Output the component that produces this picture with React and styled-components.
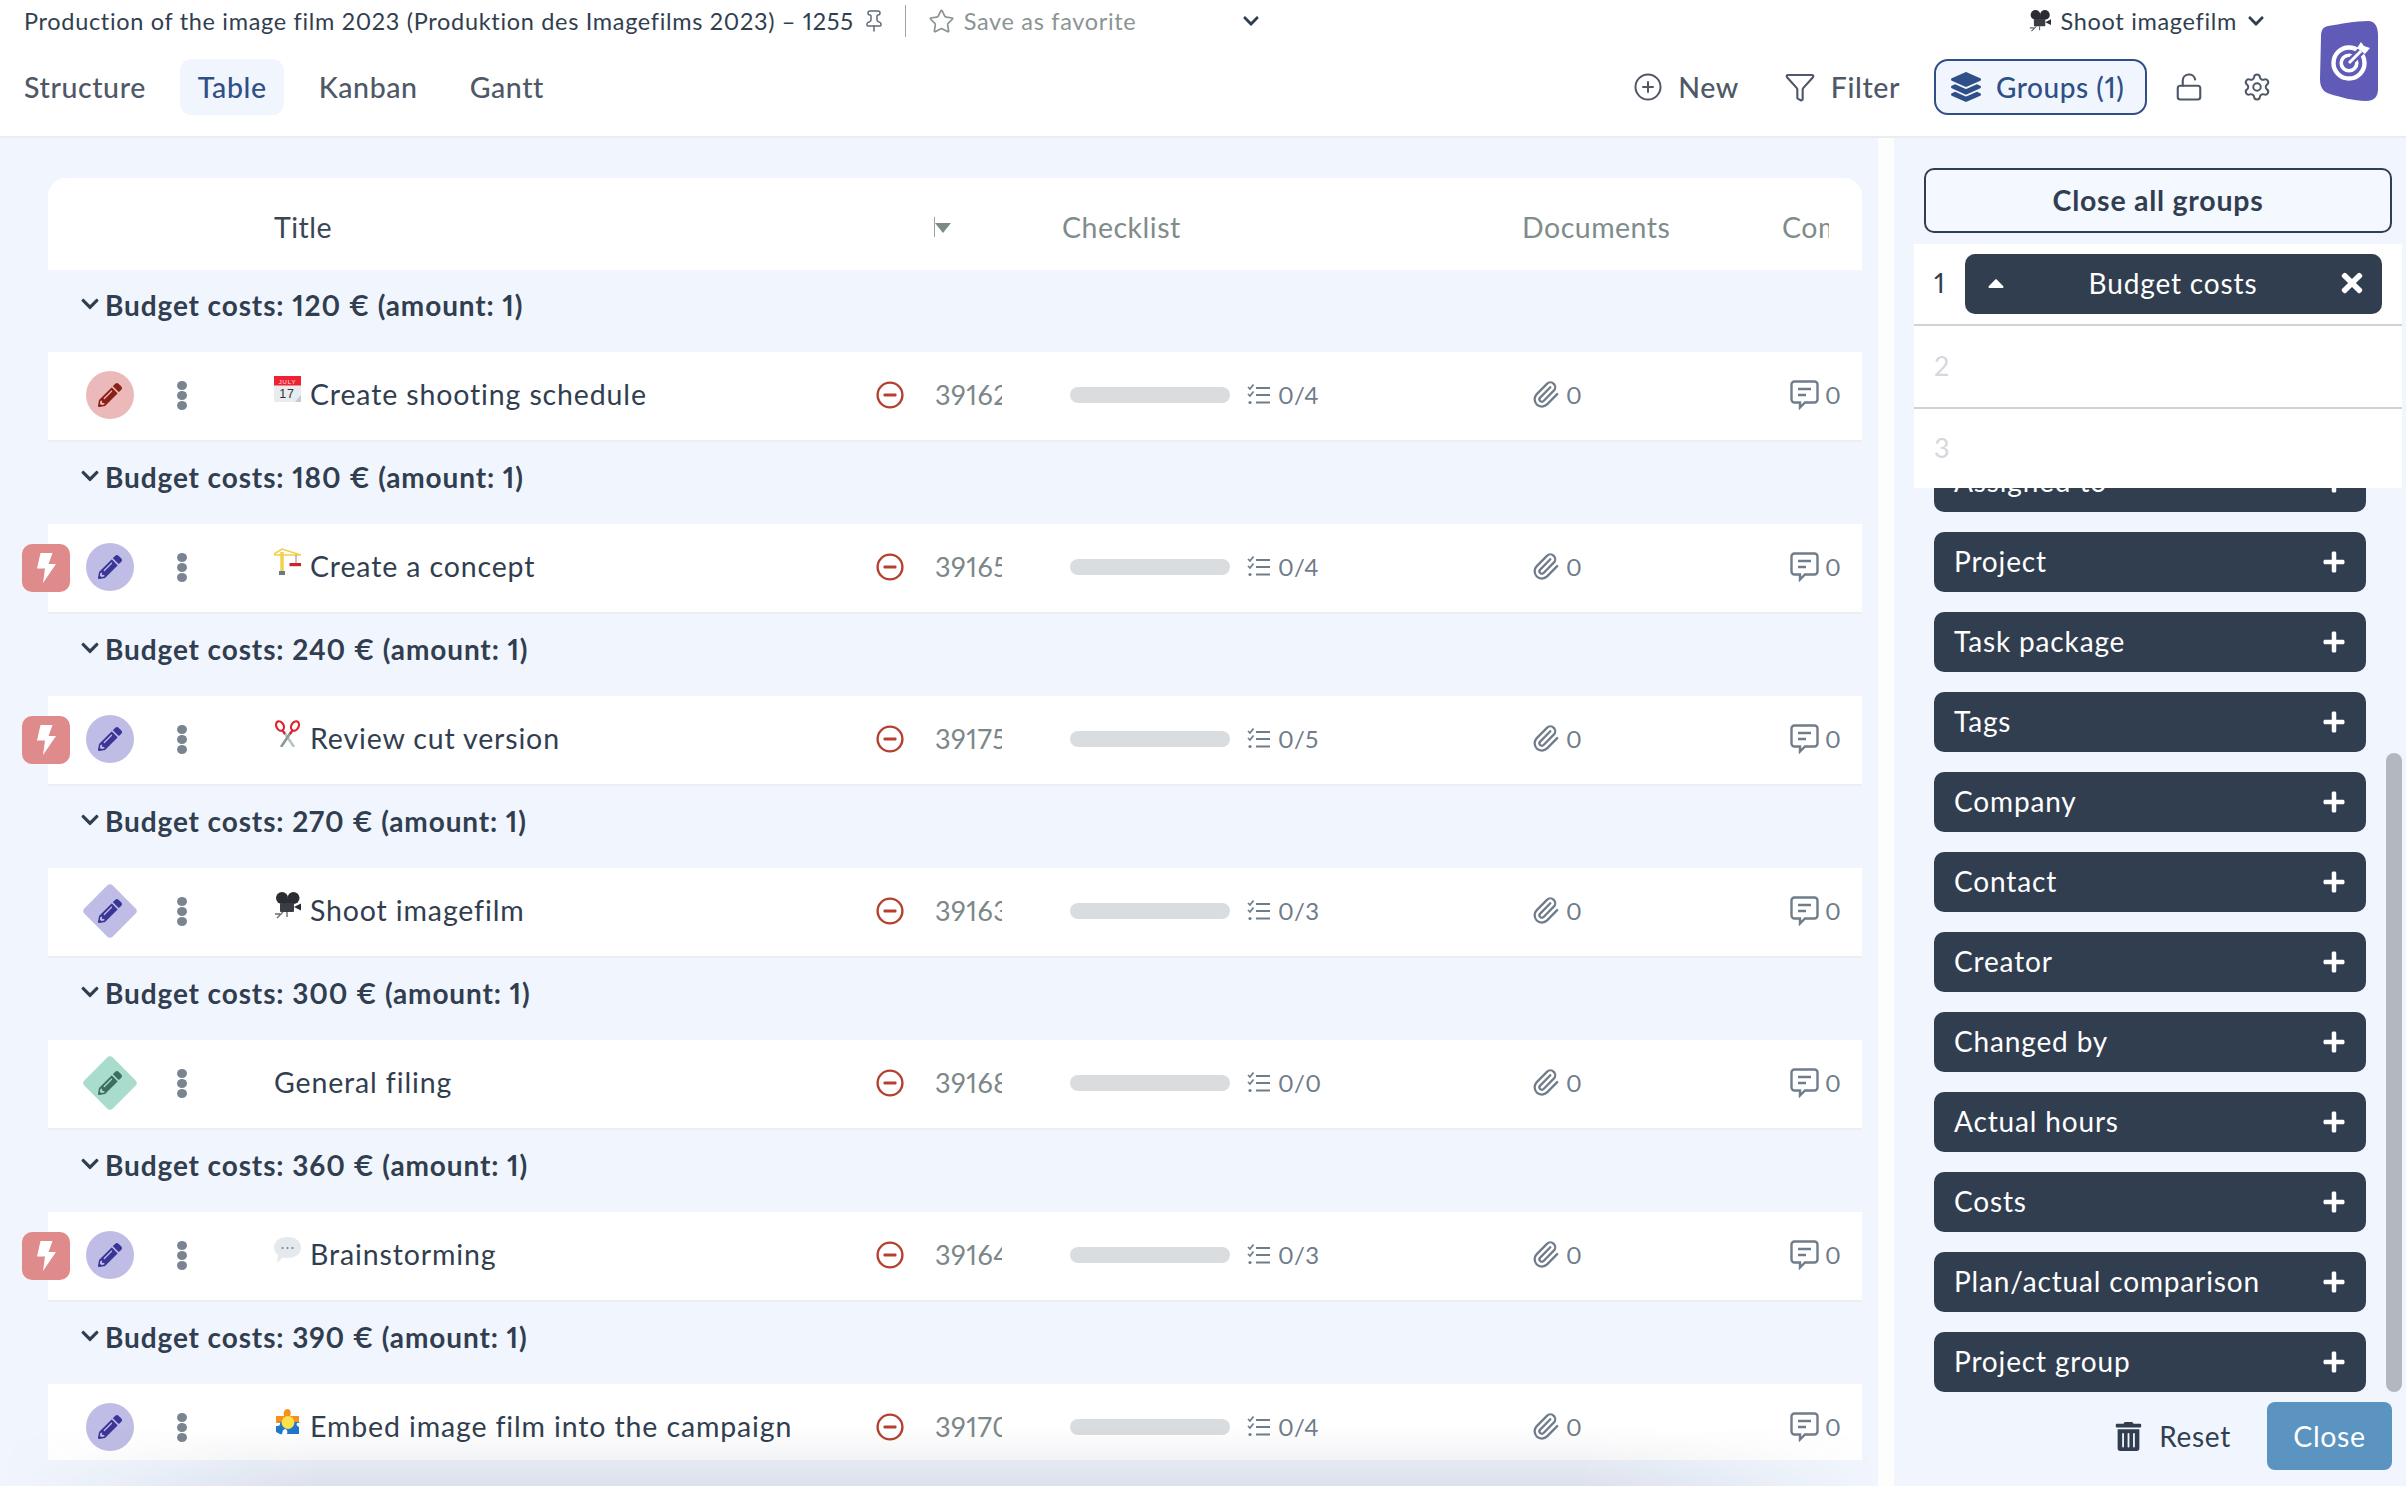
import React from 'react';
import styled, { createGlobalStyle } from 'styled-components';
import { FaPencilAlt, FaLayerGroup, FaChevronDown, FaTimes, FaPlus, FaCaretUp, FaTrashAlt } from 'react-icons/fa';
import { Pin, Star, CirclePlus, Funnel, LockOpen, Settings, Paperclip } from 'lucide-react';

const GlobalStyle = createGlobalStyle`
  html, body { margin: 0; padding: 0; background: #fff; }
  * { box-sizing: border-box; }
  body { font-family: "Lato", "Noto Sans", sans-serif; color: #313E50; font-variant-numeric: proportional-nums; }
`;

const COLS = '226px 603px 58px 135px 461px 259px 72px';

const Page = styled.div`
  width: 2406px; height: 1486px; display: flex; flex-direction: column; overflow: hidden;
`;
const Header = styled.header`
  height: 138px; flex: none; display: flex; padding: 0 28px 0 24px; background: #fff;
  border-bottom: 2px solid #E9ECF3; position: relative; z-index: 2;
`;
const HeaderMain = styled.div`flex: 1; display: flex; flex-direction: column; min-width: 0;`;
const TopRow = styled.div`
  height: 42px; display: flex; align-items: center; font-size: 23.5px; letter-spacing: .68px; color: #313E50; white-space: nowrap;
`;
const PinWrap = styled.span`display: flex; margin-left: 8px; color: #5F6B78;`;
const Divider = styled.span`width: 1px; height: 32px; background: #9BA3AB; margin: 0 22px 0 19px;`;
const FavText = styled.span`color: #8A9492; margin-left: 9px;`;
const StarWrap = styled.span`display: flex; color: #8A9492;`;
const FavChevron = styled.span`display: flex; margin-left: 106px; color: #313E50; font-size: 18px;`;
const Crumb = styled.div`margin-left: auto; display: flex; align-items: center; padding-right: 7px;`;
const CrumbText = styled.span`margin-left: 10px;`;
const CrumbChevron = styled.span`display: flex; margin-left: 10px; font-size: 18px;`;
const NavRow = styled.div`height: 56px; margin-top: 17px; display: flex; align-items: center; gap: 17px;`;
const Tab = styled.div`
  height: 56px; display: flex; align-items: center; padding: 0 17.5px; border-radius: 12px; font-size: 28.5px; letter-spacing: .6px; font-weight: 500;
  color: ${p => (p.$active ? '#2F4F87' : '#4F5866')};
  background: ${p => (p.$active ? '#F1F6FE' : 'transparent')};
  &:first-child { padding-left: 0; }
`;
const NavActions = styled.div`margin-left: auto; display: flex; align-items: center;`;
const Action = styled.div`
  display: flex; align-items: center; gap: 15px; font-size: 28.5px; letter-spacing: .6px; font-weight: 500; color: #4F5866; margin-right: ${p => p.$mr || 0}px;
`;
const GroupsBtn = styled.div`
  width: 213px; height: 56px; display: flex; align-items: center; gap: 15px; padding-left: 15px; font-size: 28px; letter-spacing: .55px; font-weight: 500; white-space: nowrap;
  color: #2F4F87; background: #F1F6FE; border: 2px solid #2F4F87; border-radius: 14px; margin-right: 27px;
`;
const IconBtn = styled.span`display: flex; color: #4F5866; margin-right: ${p => p.$mr || 0}px;`;
const LogoWrap = styled.div`flex: none; width: 58px; margin: 21px 0 0 48px;`;

const Main = styled.main`flex: 1; display: flex; min-height: 0;`;
const LeftPane = styled.section`
  width: 1878px; flex: none; position: relative; overflow: hidden; background: #F1F6FE; padding: 40px 16px 26px 48px;
`;
const TableClip = styled.div`height: 100%; overflow: hidden; margin-left: -48px; padding-left: 48px;`;
const TableCard = styled.div`width: 1814px;`;
const HeadRow = styled.div`
  height: 92px; display: grid; grid-template-columns: ${COLS}; align-items: center; background: #fff; border-radius: 18px 18px 0 0;
  font-size: 28.5px; letter-spacing: .5px; color: #808C8C; padding-top: 6px;
`;
const HeadCell = styled.div`
  grid-column: ${p => p.$col}; margin-left: ${p => p.$ml || 0}px; color: ${p => (p.$dark ? '#3A4656' : '#808C8C')};
  white-space: nowrap; overflow: hidden; max-width: ${p => p.$max || 'none'};
`;
const SortMark = styled.div`
  grid-column: 4; margin-left: -1px; display: flex; align-items: center; height: 20px; border-left: 1px solid #9AA3A3;
  &::after { content: ''; border-left: 8px solid transparent; border-right: 8px solid transparent; border-top: 10px solid #7E8A8A; margin-top: 1px; }
`;
const GroupHead = styled.div`
  height: 82px; display: flex; align-items: center; padding: 0 0 12px 32px; gap: 5px; font-size: 28px; font-weight: 700; letter-spacing: .88px; color: #313E50;
`;
const GroupChevron = styled.span`display: flex; font-size: 20px; margin-top: -3px;`;
const Row = styled.div`
  height: 90px; position: relative; display: grid; grid-template-columns: ${COLS}; align-items: center; background: #fff; border-bottom: 2px solid #ECEEF2; padding-bottom: 2px;
`;
const Bolt = styled.span`
  position: absolute; left: -26px; top: 20px; width: 48px; height: 48px; border-radius: 10px; background: #E08B8B; display: flex; align-items: center; justify-content: center;
`;
const Status = styled.div`display: flex; align-items: center; padding-left: 38px;`;
const StatusIcon = styled.span`
  width: 48px; height: 48px; position: relative; display: flex; align-items: center; justify-content: center; font-size: 24px; color: ${p => p.$fg};
  border-radius: ${p => (p.$shape === 'circle' ? '50%' : '0')};
  background: ${p => (p.$shape === 'circle' ? p.$bg : 'transparent')};
  &::before {
    content: ''; display: ${p => (p.$shape === 'diamond' ? 'block' : 'none')}; position: absolute; left: 4px; top: 4px; width: 40px; height: 40px; border-radius: 4px;
    background: ${p => p.$bg}; transform: rotate(45deg);
  }
  svg { position: relative; }
`;
const Dots = styled.span`display: flex; flex-direction: column; gap: 1px; margin-left: 43px;`;
const Dot = styled.i`display: block; width: 10px; height: 9px; border-radius: 50%; background: #7A8490;`;
const TitleCell = styled.div`display: flex; align-items: center; font-size: 28.5px; letter-spacing: .86px; color: #313E50; white-space: nowrap; margin-top: -2px;`;
const EmojiWrap = styled.span`display: flex; width: 27px; margin-right: 9px; transform: translateY(-5px);`;
const RedCell = styled.div`display: flex; margin-left: -1px;`;
const IdCell = styled.div`font-size: 27px; letter-spacing: .5px; color: #7C8789; width: 67px; overflow: hidden; white-space: nowrap; margin-top: -2px;`;
const CheckCell = styled.div`display: flex; align-items: center; font-size: 24px; letter-spacing: .4px; color: #6F7C8A; margin-top: -1px;`;
const Progress = styled.span`width: 160px; height: 16px; border-radius: 8px; background: #DADDE0; margin-right: 17px;`;
const CheckCount = styled.span`margin-left: 8px;`;
const DocCell = styled.div`display: flex; align-items: center; gap: 6px; font-size: 24px; color: #6F7C8A; margin-top: -1px;`;

const Shadow = styled.div`
  position: absolute; left: 0; right: 0; bottom: 0; height: 60px; pointer-events: none;
  background: linear-gradient(to bottom, rgba(50, 60, 90, 0), rgba(50, 60, 90, .11));
  mask-image: linear-gradient(90deg, transparent 0, #000 320px, #000 1580px, transparent 1878px);
`;
const Gutter = styled.div`width: 16px; flex: none; background: #FDFDFE;`;
const Side = styled.aside`flex: 1; background: #F1F6FE; display: flex; flex-direction: column; padding-top: 30px; min-width: 0;`;
const CloseAll = styled.div`
  margin-left: 30px; width: 468px; height: 65px; flex: none; display: flex; align-items: center; justify-content: center; background: #F4F8FF; padding-bottom: 2px;
  border: 2px solid #313E50; border-radius: 10px; font-size: 28.5px; font-weight: 700; letter-spacing: .74px; color: #313E50;
`;
const Slots = styled.div`margin: 11px 4px 0 20px; background: #fff; flex: none; position: relative; z-index: 1;`;
const Slot = styled.div`
  height: ${p => p.$h}px; display: flex; align-items: center; padding-left: 20px; border-bottom: ${p => (p.$line ? '2px solid #CDD3D9' : 'none')};
`;
const SlotNum = styled.span`width: 31px; font-size: 27px; padding-bottom: 3px; color: ${p => (p.$on ? '#313E50' : '#D5D8DC')};`;
const Chip = styled.div`
  width: 417px; height: 60px; display: flex; align-items: center; justify-content: space-between; padding: 0 15px 2px 18px; background: #313E50; border-radius: 10px;
  color: #fff; font-size: 28px; letter-spacing: .85px;
`;
const ChipIcon = styled.span`display: flex; font-size: ${p => p.$s}px;`;
const Available = styled.div`height: 904px; flex: none; overflow: hidden; position: relative;`;
const ItemList = styled.div`display: flex; flex-direction: column; gap: 20px; margin: -36px 0 0 40px; width: 432px;`;
const Item = styled.div`
  height: 60px; flex: none; display: flex; align-items: center; justify-content: space-between; padding: 0 20px; background: #313E50; border-radius: 10px;
  color: #fff; font-size: 28px; letter-spacing: .85px;
`;
const ItemName = styled.span`padding-bottom: 2px;`;
const PlusIcon = styled.span`display: flex; font-size: 24px;`;
const ScrollThumb = styled.div`position: absolute; right: 4px; bottom: 0; width: 16px; height: 639px; border-radius: 8px; background: #B3B7BE;`;
const Footer = styled.div`display: flex; align-items: center; justify-content: flex-end; margin: 10px 14px 0 0;`;
const ResetBtn = styled.div`display: flex; align-items: center; gap: 16px; font-size: 28px; letter-spacing: .7px; color: #313E50; margin-right: 36px;`;
const CloseBtn = styled.div`
  width: 125px; height: 68px; display: flex; align-items: center; justify-content: center; border-radius: 8px; background: #5B93C1; color: #fff; font-size: 28.5px; letter-spacing: .6px;
`;

const EmojiCalendar = () => (
  <svg width="27" height="27" viewBox="0 0 27 27">
    <rect x="0" y="0" width="27" height="26" rx="1" fill="#E8ECEE" />
    <rect x="0" y="0" width="27" height="9.5" fill="#EE2233" />
    <text x="13.5" y="8.4" textAnchor="middle" fontFamily="Liberation Sans, sans-serif" fontSize="6" fill="#FFE3E5">JULY</text>
    <text x="13" y="22.4" textAnchor="middle" fontFamily="Liberation Sans, sans-serif" fontSize="12.5" fill="#333">17</text>
    <path d="M27 19 L21 26 H27 Z" fill="#C4CAD0" />
  </svg>
);
const EmojiCrane = () => (
  <svg width="27" height="27" viewBox="0 0 27 27">
    <path d="M8 4 V24" stroke="#F3CF4A" strokeWidth="3.4" />
    <path d="M0 6 L8 1 L27 7 H0" stroke="#F3CF4A" strokeWidth="1.6" fill="none" />
    <rect x="5" y="23" width="6" height="4" fill="#6E7883" />
    <path d="M22 7 V15" stroke="#8B8B8B" strokeWidth="1" />
    <rect x="15.5" y="15" width="11.5" height="3.2" fill="#D21F2D" />
  </svg>
);
const EmojiScissors = () => (
  <svg width="27" height="27" viewBox="0 0 27 27">
    <path d="M10 12 L20 27" stroke="#B9C3C7" strokeWidth="2.6" />
    <path d="M17 12 L7 27" stroke="#8D989C" strokeWidth="2.6" />
    <ellipse cx="6" cy="6" rx="3.6" ry="5" transform="rotate(-28 6 6)" fill="none" stroke="#E0222F" strokeWidth="2.2" />
    <ellipse cx="21" cy="6" rx="3.6" ry="5" transform="rotate(28 21 6)" fill="none" stroke="#E0222F" strokeWidth="2.2" />
    <path d="M8.5 10.5 L11 14 M18.5 10.5 L16 14" stroke="#E0222F" strokeWidth="2.2" />
  </svg>
);
const EmojiCamera = ({ size = 27 }) => (
  <svg width={size} height={size} viewBox="0 0 27 27">
    <circle cx="8" cy="6" r="6" fill="#2B2D33" />
    <circle cx="19.5" cy="6" r="6" fill="#2B2D33" />
    <path d="M7 7 L21 7 L14 14 Z" fill="#2B2D33" />
    <rect x="6" y="11" width="14" height="9" rx="1" fill="#3A3D44" />
    <path d="M20 15 L27 11.5 V18.5 Z" fill="#2B2D33" />
    <path d="M9 20 L3 26 M13 20 V25 M6 22 H1" stroke="#666B72" strokeWidth="1.4" />
  </svg>
);
const EmojiBubble = () => (
  <svg width="27" height="27" viewBox="0 0 27 27">
    <path d="M13.5 1 C21 1 27 5 27 11.5 C27 18 21 22 13.5 22 C11.5 22 10 21.8 8.5 21.4 L3 27 L4.2 19 C1.6 17 0 14.5 0 11.5 C0 5 6 1 13.5 1 Z" fill="#E3E9ED" />
    <circle cx="8.5" cy="12" r="1.1" fill="#7B8790" />
    <circle cx="13.5" cy="12" r="1.1" fill="#7B8790" />
    <circle cx="18.5" cy="12" r="1.1" fill="#7B8790" />
  </svg>
);
const EmojiPuzzle = () => (
  <svg width="27" height="27" viewBox="0 0 27 27">
    <path d="M4 8 H10 C9 5 10 1 13.5 1 C17 1 17.5 5 16 8 H25 V15 H2 V8 Z" fill="#F5921E" />
    <path d="M2 14 H4 C7 12 7 18 4 18 H2 V24 C5 25 6 27 8 26 C9 24 8 22 11 21 C13 21 14 24 13 26 H25 V19 C23 18 22 17 23 15 L27 14 Z" fill="#1F78C8" />
    <circle cx="14" cy="14.5" r="6.4" fill="#FCE24A" />
  </svg>
);
const EMOJI = { calendar: EmojiCalendar, crane: EmojiCrane, scissors: EmojiScissors, camera: EmojiCamera, bubble: EmojiBubble, puzzle: EmojiPuzzle };

const BoltGlyph = () => (
  <svg width="19" height="30" viewBox="0 0 19 30"><path d="M3.5 0 H15.5 L11.5 11 H19 L6 30 L8 15.5 H0 Z" fill="#fff" /></svg>
);
const MinusGlyph = () => (
  <svg width="28" height="28" viewBox="0 0 28 28">
    <circle cx="14" cy="14" r="12.4" fill="none" stroke="#B5402F" strokeWidth="2.4" />
    <rect x="7.5" y="12.4" width="13" height="3.2" rx="1" fill="#B5402F" />
  </svg>
);
const ChecklistGlyph = () => (
  <svg width="23" height="24" viewBox="0 0 23 24" fill="none" stroke="#6F7C8A" strokeWidth="2">
    <path d="M9 5 H23 M9 12 H23 M9 19.5 H23" strokeWidth="2.2" />
    <path d="M1 4 L3 6 L6.5 1.5 M1 11 L3 13 L6.5 8.5" strokeWidth="1.7" />
    <circle cx="3" cy="19.5" r="1.6" fill="#6F7C8A" stroke="none" />
  </svg>
);
const CommentGlyph = () => (
  <svg width="29" height="30" viewBox="0 0 29 30" fill="none" stroke="#6F7C8A" strokeWidth="2.4">
    <path d="M4.5 1.5 H24.5 A3 3 0 0 1 27.5 4.5 V19.5 A3 3 0 0 1 24.5 22.5 H15 L10 27.5 V22.5 H4.5 A3 3 0 0 1 1.5 19.5 V4.5 A3 3 0 0 1 4.5 1.5 Z" />
    <path d="M8 9 H21 M8 15 H16" />
  </svg>
);
const DotsGlyph = () => (<Dots><Dot /><Dot /><Dot /></Dots>);
const LogoGlyph = () => (
  <svg width="58" height="80" viewBox="0 0 58 80">
    <path d="M8 5 C20 3 36 0 48 0 C55 0 58 6 58 14 L58 68 C58 76 54 80 46 80 C34 80 20 76 10 73 C3 71 0 66 0 58 L1 16 C1 9 3 6 8 5 Z" fill="#5F5BB7" />
    <circle cx="29" cy="42" r="15.5" fill="none" stroke="#fff" strokeWidth="4.4" />
    <circle cx="29" cy="42" r="7.8" fill="none" stroke="#fff" strokeWidth="3.6" />
    <path d="M29 42 L44 27" stroke="#5F5BB7" strokeWidth="8" />
    <path d="M29 42 L41 30" stroke="#fff" strokeWidth="3" />
    <path d="M37 27 L41 21 L44 25 L50 27 L45 33 L41 30 Z" fill="#fff" />
  </svg>
);

const TASKS = [
  { budget: 120, emoji: 'calendar', title: 'Create shooting schedule', id: '39162', count: '0/4', shape: 'circle', bg: '#EBB9B9', fg: '#8B2019' },
  { budget: 180, emoji: 'crane', title: 'Create a concept', id: '39165', count: '0/4', shape: 'circle', bg: '#BFBDE5', fg: '#3A3596', bolt: true },
  { budget: 240, emoji: 'scissors', title: 'Review cut version', id: '39175', count: '0/5', shape: 'circle', bg: '#BFBDE5', fg: '#3A3596', bolt: true },
  { budget: 270, emoji: 'camera', title: 'Shoot imagefilm', id: '39163', count: '0/3', shape: 'diamond', bg: '#BFBDE5', fg: '#3A3596' },
  { budget: 300, title: 'General filing', id: '39168', count: '0/0', shape: 'diamond', bg: '#A9DCCD', fg: '#3E6E5E' },
  { budget: 360, emoji: 'bubble', title: 'Brainstorming', id: '39164', count: '0/3', shape: 'circle', bg: '#BFBDE5', fg: '#3A3596', bolt: true },
  { budget: 390, emoji: 'puzzle', title: 'Embed image film into the campaign', id: '39170', count: '0/4', shape: 'circle', bg: '#BFBDE5', fg: '#3A3596' },
];
const ITEMS = ['Assigned to', 'Project', 'Task package', 'Tags', 'Company', 'Contact', 'Creator', 'Changed by', 'Actual hours', 'Costs', 'Plan/actual comparison', 'Project group'];

const TaskGroup = ({ t }) => {
  const Emoji = t.emoji ? EMOJI[t.emoji] : null;
  return (
    <>
      <GroupHead>
        <GroupChevron><FaChevronDown /></GroupChevron>
        Budget costs: {t.budget} € (amount: 1)
      </GroupHead>
      <Row>
        {t.bolt && <Bolt><BoltGlyph /></Bolt>}
        <Status>
          <StatusIcon $shape={t.shape} $bg={t.bg} $fg={t.fg}><FaPencilAlt /></StatusIcon>
          <DotsGlyph />
        </Status>
        <TitleCell>
          {Emoji && <EmojiWrap><Emoji /></EmojiWrap>}
          {t.title}
        </TitleCell>
        <RedCell><MinusGlyph /></RedCell>
        <IdCell>{t.id}</IdCell>
        <CheckCell>
          <Progress />
          <ChecklistGlyph />
          <CheckCount>{t.count}</CheckCount>
        </CheckCell>
        <DocCell><Paperclip size={29} color="#6F7C8A" strokeWidth={1.9} />0</DocCell>
        <DocCell><CommentGlyph />0</DocCell>
      </Row>
    </>
  );
};

export default function App() {
  return (
    <Page>
      <GlobalStyle />
      <Header>
        <HeaderMain>
          <TopRow>
            Production of the image film 2023 (Produktion des Imagefilms 2023) – 1255
            <PinWrap><Pin size={24} strokeWidth={1.5} /></PinWrap>
            <Divider />
            <StarWrap><Star size={27} strokeWidth={1.5} /></StarWrap>
            <FavText>Save as favorite</FavText>
            <FavChevron><FaChevronDown /></FavChevron>
            <Crumb>
              <EmojiCamera size={22} />
              <CrumbText>Shoot imagefilm</CrumbText>
              <CrumbChevron><FaChevronDown /></CrumbChevron>
            </Crumb>
          </TopRow>
          <NavRow>
            <Tab>Structure</Tab>
            <Tab $active>Table</Tab>
            <Tab>Kanban</Tab>
            <Tab>Gantt</Tab>
            <NavActions>
              <Action $mr={45}><CirclePlus size={30} strokeWidth={1.6} />New</Action>
              <Action $mr={34}><Funnel size={32} strokeWidth={1.6} />Filter</Action>
              <GroupsBtn><FaLayerGroup size={30} />Groups (1)</GroupsBtn>
              <IconBtn $mr={38}><LockOpen size={30} strokeWidth={1.7} /></IconBtn>
              <IconBtn><Settings size={30} strokeWidth={1.6} /></IconBtn>
            </NavActions>
          </NavRow>
        </HeaderMain>
        <LogoWrap><LogoGlyph /></LogoWrap>
      </Header>
      <Main>
        <LeftPane>
          <TableClip>
            <TableCard>
              <HeadRow>
                <HeadCell $col={2} $dark>Title</HeadCell>
                <SortMark />
                <HeadCell $col={5} $ml={-8}>Checklist</HeadCell>
                <HeadCell $col={6} $ml={-9}>Documents</HeadCell>
                <HeadCell $col={7} $ml={-8} $max="47px">Comments</HeadCell>
              </HeadRow>
              {TASKS.map(t => <TaskGroup key={t.id} t={t} />)}
            </TableCard>
          </TableClip>
          <Shadow />
        </LeftPane>
        <Gutter />
        <Side>
          <CloseAll>Close all groups</CloseAll>
          <Slots>
            <Slot $h={82} $line>
              <SlotNum $on>1</SlotNum>
              <Chip>
                <ChipIcon $s={26}><FaCaretUp /></ChipIcon>
                Budget costs
                <ChipIcon $s={30}><FaTimes /></ChipIcon>
              </Chip>
            </Slot>
            <Slot $h={83} $line><SlotNum>2</SlotNum></Slot>
            <Slot $h={79}><SlotNum>3</SlotNum></Slot>
          </Slots>
          <Available>
            <ItemList>
              {ITEMS.map(name => (
                <Item key={name}><ItemName>{name}</ItemName><PlusIcon><FaPlus /></PlusIcon></Item>
              ))}
            </ItemList>
            <ScrollThumb />
          </Available>
          <Footer>
            <ResetBtn><FaTrashAlt size={29} />Reset</ResetBtn>
            <CloseBtn>Close</CloseBtn>
          </Footer>
        </Side>
      </Main>
    </Page>
  );
}
